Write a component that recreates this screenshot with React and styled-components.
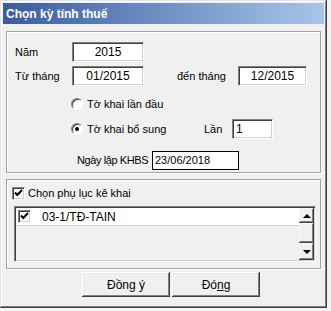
import React from 'react';
import styled, { createGlobalStyle } from 'styled-components';

const GlobalStyle = createGlobalStyle`
  html, body {
    margin: 0;
    padding: 0;
    background: #f4f4f4;
  }
  * {
    box-sizing: border-box;
  }
`;

const Window = styled.div`
  width: 327px;
  height: 308px;
  padding: 3px;
  background: #f0f0f0;
  display: flex;
  flex-direction: column;
  font-family: "Liberation Sans", Arial, sans-serif;
  font-size: 11px;
  color: #000;
  box-shadow: inset -1px -1px #404040, inset 1px 1px #e4e4e4,
    inset -2px -2px #808080, inset 2px 2px #ffffff;
`;

const TitleBar = styled.div`
  height: 21px;
  display: flex;
  align-items: center;
  padding-left: 3px;
  background: linear-gradient(to right, #3b5c9d, #a7c5ea);
  color: #fff;
  font-weight: bold;
  font-size: 12px;
`;

const GroupBox = styled.div`
  margin: ${(p) => p.$mt}px 3px 0 3px;
  height: ${(p) => p.$h}px;
  border: 1px solid #a0a0a0;
  box-shadow: inset 1px 1px #fff, 1px 1px #fff;
  padding: ${(p) => p.$pad};
  display: flex;
  flex-direction: column;
`;

const Row = styled.div`
  display: flex;
  align-items: center;
  height: 20px;
  margin-top: ${(p) => p.$mt || 0}px;
  padding-left: ${(p) => p.$indent || 0}px;
`;

const Label = styled.span`
  width: ${(p) => p.$w}px;
  margin-left: ${(p) => p.$ml || 0}px;
  letter-spacing: ${(p) => p.$tight || 0}px;
  flex-shrink: 0;
  white-space: nowrap;
`;

const Field = styled.div`
  width: ${(p) => p.$w}px;
  height: 20px;
  flex-shrink: 0;
  background: #fff;
  display: flex;
  align-items: center;
  justify-content: ${(p) => (p.$center ? 'center' : 'flex-start')};
  padding-left: ${(p) => (p.$center ? 0 : 3)}px;
  font-size: 12px;
  border: 1px solid;
  border-color: #808080 #ffffff #ffffff #808080;
  box-shadow: inset 1px 1px #404040, inset -1px -1px #d4d0c8;
`;

const DateField = styled(Field)`
  border: 1px solid #000;
  box-shadow: none;
  height: 19px;
  font-size: 11px;
  padding-left: 2px;
`;

const Radio = styled.span`
  width: 12px;
  height: 12px;
  flex-shrink: 0;
  border-radius: 50%;
  background: #fff;
  border: 1px solid;
  border-color: #808080 #ffffff #ffffff #808080;
  box-shadow: inset 1px 1px #404040;
  position: relative;
  margin-right: 4px;

  &::after {
    content: '';
    display: ${(p) => (p.$checked ? 'block' : 'none')};
    position: absolute;
    left: 3px;
    top: 3px;
    width: 4px;
    height: 4px;
    border-radius: 50%;
    background: #000;
  }
`;

const CheckBoxBox = styled.span`
  width: 13px;
  height: 13px;
  flex-shrink: 0;
  background: #fff;
  border: 1px solid;
  border-color: #808080 #ffffff #ffffff #808080;
  box-shadow: inset 1px 1px #404040, inset -1px -1px #d4d0c8;
  display: flex;
  align-items: center;
  justify-content: center;
  margin-right: ${(p) => p.$gap}px;
`;

const CheckBox = ({ gap }) => (
  <CheckBoxBox $gap={gap}>
    <svg width="9" height="9" viewBox="0 0 9 9">
      <path d="M1 3.5 L3.3 6 L8 1" fill="none" stroke="#000" strokeWidth="2" />
    </svg>
  </CheckBoxBox>
);

const ListBox = styled.div`
  margin: 6px 4px 0 2px;
  height: 56px;
  display: flex;
  border: 1px solid;
  border-color: #808080 #ffffff #ffffff #808080;
  box-shadow: inset 1px 1px #404040, inset -1px -1px #d4d0c8;
  padding: 1px;
`;

const ListBody = styled.div`
  flex: 1;
  background: #f0f0f0;
`;

const ListRow = styled.div`
  height: 18px;
  background: #fff;
  display: flex;
  align-items: center;
  padding-left: 2px;
  border-bottom: 1px solid #d0d0d0;
  font-size: 12px;
`;

const ScrollBar = styled.div`
  width: 15px;
  display: flex;
  flex-direction: column;
`;

const ScrollPart = styled.div`
  height: ${(p) => p.$h}px;
  flex: ${(p) => (p.$grow ? 1 : 'none')};
  background: #f0f0f0;
  display: flex;
  align-items: center;
  justify-content: center;
  box-shadow: inset -1px -1px #404040, inset 1px 1px #f8f8f8,
    inset -2px -2px #808080;
`;

const Arrow = styled.span`
  width: 0;
  height: 0;
  border-left: 4px solid transparent;
  border-right: 4px solid transparent;
  ${(p) =>
    p.$up ? 'border-bottom: 4px solid #000;' : 'border-top: 4px solid #000;'}
`;

const ButtonBar = styled.div`
  display: flex;
  gap: 2px;
  padding-left: 79px;
  margin-top: 3px;
`;

const Button = styled.div`
  width: 88px;
  height: 25px;
  background: #f0f0f0;
  display: flex;
  align-items: center;
  justify-content: center;
  font-size: 12px;
  box-shadow: inset -1px -1px #404040, inset 1px 1px #ffffff,
    inset -2px -2px #808080, inset 2px 2px #e8e8e8;
`;

export default function App() {
  return (
    <>
      <GlobalStyle />
      <Window>
        <TitleBar>Chọn kỳ tính thuế</TitleBar>

        <GroupBox $mt={7} $h={142} $pad="10px 8px 0 8px">
          <Row>
            <Label $w={57}>Năm</Label>
            <Field $w={72} $center>2015</Field>
          </Row>
          <Row $mt={4}>
            <Label $w={57}>Từ tháng</Label>
            <Field $w={72} $center>01/2015</Field>
            <Label $w={61} $ml={33}>đến tháng</Label>
            <Field $w={69} $center>12/2015</Field>
          </Row>
          <Row $mt={8} $indent={56}>
            <Radio />
            <Label $w={117}>Tờ khai lần đầu</Label>
          </Row>
          <Row $mt={5} $indent={56}>
            <Radio $checked />
            <Label $w={117}>Tờ khai bổ sung</Label>
            <Label $w={28}>Lần</Label>
            <Field $w={41}>1</Field>
          </Row>
          <Row $mt={11} $indent={62}>
            <Label $w={75} $tight={-0.4}>Ngày lập KHBS</Label>
            <DateField $w={87}>23/06/2018</DateField>
          </Row>
        </GroupBox>

        <GroupBox $mt={6} $h={90} $pad="6px 0 0 5px">
          <Row style={{ height: 14 }}>
            <CheckBox gap={3} />
            <span>Chọn phụ lục kê khai</span>
          </Row>
          <ListBox>
            <ListBody>
              <ListRow>
                <CheckBox gap={11} />
                03-1/TĐ-TAIN
              </ListRow>
            </ListBody>
            <ScrollBar>
              <ScrollPart $h={15}>
                <Arrow $up />
              </ScrollPart>
              <ScrollPart $grow />
              <ScrollPart $h={17}>
                <Arrow />
              </ScrollPart>
            </ScrollBar>
          </ListBox>
        </GroupBox>

        <ButtonBar>
          <Button>Đồng ý</Button>
          <Button>
            <span>
              Đó<u>n</u>g
            </span>
          </Button>
        </ButtonBar>
      </Window>
    </>
  );
}
